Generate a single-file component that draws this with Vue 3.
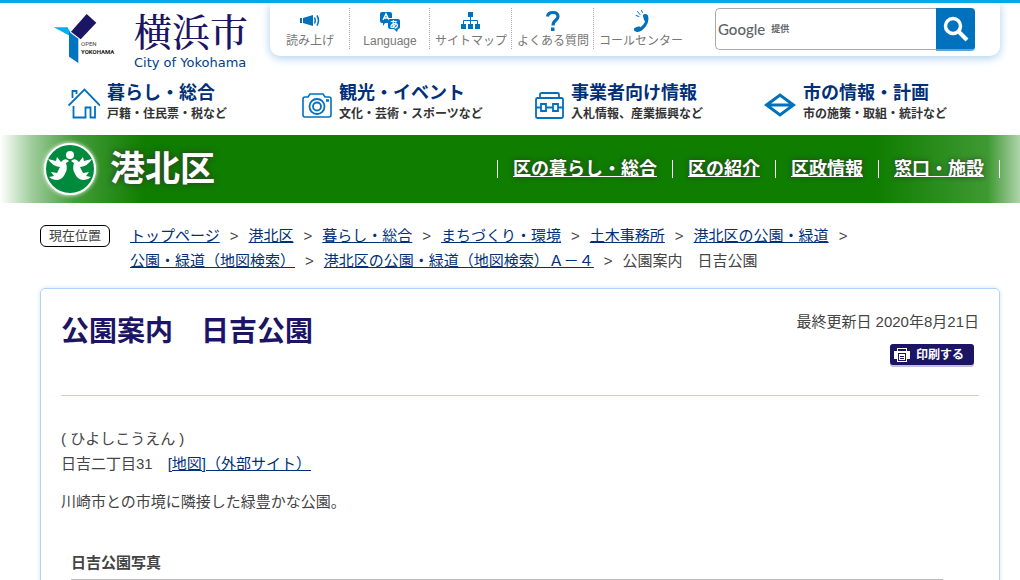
<script setup>
const tools = [
  { id: 'speech', label: '読み上げ' },
  { id: 'language', label: 'Language' },
  { id: 'sitemap', label: 'サイトマップ' },
  { id: 'faq', label: 'よくある質問' },
  { id: 'call', label: 'コールセンター' },
]
const mainNav = [
  { id: 'house', title: '暮らし・総合', sub: '戸籍・住民票・税など' },
  { id: 'camera', title: '観光・イベント', sub: '文化・芸術・スポーツなど' },
  { id: 'case', title: '事業者向け情報', sub: '入札情報、産業振興など' },
  { id: 'emblem', title: '市の情報・計画', sub: '市の施策・取組・統計など' },
]
const wardNav = ['区の暮らし・総合', '区の紹介', '区政情報', '窓口・施設']
const crumbs = [
  'トップページ',
  '港北区',
  '暮らし・総合',
  'まちづくり・環境',
  '土木事務所',
  '港北区の公園・緑道',
  '公園・緑道（地図検索）',
  '港北区の公園・緑道（地図検索）Ａ－４',
]
</script>

<template>
  <div class="page">
    <header class="top">
      <a class="logo" href="#">
        <svg class="mark" viewBox="36 40 198 153" aria-hidden="true">
          <path d="M38 83H79L83 106Z" fill="#00b0f0" />
          <path d="M79 83L88 97L84 107L60 93Z" fill="#00b0f0" />
          <path d="M90 96L137 43L166 69L119 119Z" fill="#1c1464" />
          <path d="M84 96L112 117V190L84 171Z" fill="#0074bf" />
          <text x="120" y="139" class="m1">OPEN</text>
          <text x="120" y="163" class="m2">YOKOHAMA</text>
        </svg>
        <span class="names">
          <span class="ja">横浜市</span>
          <span class="en">City of Yokohama</span>
        </span>
      </a>
      <div class="panel">
        <ul class="tools">
          <li v-for="t in tools" :key="t.id">
            <a href="#">
              <svg v-if="t.id === 'speech'" width="20" height="22" viewBox="0 0 20 22">
                <path d="M0 8h2v5H0zM3 8L13 5v11L3 13z" fill="#0071bd" />
                <path d="M14.500 7.500q1.500 3 0 6M17 5.500q3 5 0 10" fill="none" stroke="#0071bd" stroke-width="1.500" />
              </svg>
              <svg v-else-if="t.id === 'language'" width="22" height="22" viewBox="0 0 22 22">
                <path d="M3 2h8q2 0 2 2v4H9v5H6l-2 3v-3H3q-2 0-2-2V4q0-2 2-2z" fill="#0071bd" />
                <path d="M11 9h8q2 0 2 2v6q0 2-2 2l-1 3-3-3h-4q-2 0-2-2v-6q0-2 2-2z" fill="#0071bd" />
                <path d="M4 10l3-6 2.500 5M5 8h4" fill="none" stroke="#fff" stroke-width="1.500" />
                <text x="10.500" y="17.500" class="kana">あ</text>
              </svg>
              <svg v-else-if="t.id === 'sitemap'" width="20" height="22" viewBox="0 0 20 22">
                <path d="M7 2h5v5H7zM0 14h5v5H0zM7 14h5v5H7zM14 14h5v5h-5z" fill="#0071bd" />
                <path d="M9.500 7v7M2.500 14v-3.500h14V14" fill="none" stroke="#0071bd" />
              </svg>
              <svg v-else-if="t.id === 'faq'" width="16" height="22" viewBox="0 0 16 22">
                <path d="M2.500 6.500q.5-4 5.500-4t5 4q0 2-2.500 4T8 15.500" fill="none" stroke="#0071bd" stroke-width="3.200" />
                <path d="M6 17.500h3.500V21H6z" fill="#0071bd" />
              </svg>
              <svg v-else width="18" height="22" viewBox="0 0 18 22" fill="none" stroke="#0071bd" stroke-linecap="round">
                <path d="M14.500 6Q16 11 12.500 15.500T5.500 20.500" stroke-width="3" />
                <path d="M13 6l1 3.500M4 19.500l3-1" stroke-width="4" />
                <path d="M4 5.500l3 1M5.500 1.500l2.500 3M9.500.5l1 2" />
              </svg>
              <span>{{ t.label }}</span>
            </a>
          </li>
        </ul>
        <form class="search" @submit.prevent>
          <label class="field">
            <span class="brand">Google</span>
            <span class="by">提供</span>
            <input type="text" aria-label="サイト内検索" />
          </label>
          <button type="submit" aria-label="検索">
            <svg width="26" height="26" viewBox="0 0 26 26" fill="none" stroke="#fff">
              <circle cx="10" cy="10" r="7.500" stroke-width="3.500" />
              <path d="M15.500 15.500L24 24" stroke-width="4" />
            </svg>
          </button>
        </form>
      </div>
    </header>

    <nav class="main-nav">
      <a v-for="n in mainNav" :key="n.id" href="#">
        <svg width="32" height="32" viewBox="0 0 32 32" fill="none" stroke="#0071bd" stroke-width="1.800">
          <path v-if="n.id === 'house'" d="M.5 17.500L16.500 1.500L32 17.500M4.500 10V3h4v3M5.500 18v11.500h12v-10h5v10H27V18" />
          <template v-else-if="n.id === 'camera'">
            <path d="M5 9h3l2-3h13l2 3h4q2 0 2 2v16q0 2-2 2H5q-2 0-2-2V11q0-2 2-2z" stroke-width="1.600" />
            <circle cx="17" cy="18.500" r="7.500" />
            <circle cx="17" cy="18.500" r="4" />
            <path d="M26 12.500h3" stroke-width="2.500" />
          </template>
          <path v-else-if="n.id === 'case'" d="M8 10V6.500q0-1.500 1.500-1.500h16q1.500 0 1.500 1.500V10M5.500 10h24q1.500 0 1.500 1.500v17q0 1.500-1.500 1.500h-24Q4 30 4 28.500v-17Q4 10 5.500 10zM4 19.500h5M14 19.500h7M26 19.500h5M9 16h5v7H9zM21 16h5v7h-5z" />
          <path v-else d="M2.500 17L16 7l13.500 10L16 27zM2 17h28" stroke-width="3" />
        </svg>
        <span class="label">
          <strong>{{ n.title }}</strong>
          <small>{{ n.sub }}</small>
        </span>
      </a>
    </nav>

    <div class="ward">
      <a class="ward-name" href="#">
        <svg width="60" height="60" viewBox="0 0 60 60">
          <circle cx="30" cy="30" r="25" fill="#008a3e" stroke="#fff" stroke-width="2" />
          <g fill="#fff">
            <circle cx="30" cy="16" r="4" />
            <path d="M8 20L16 22L17 18L21 23Q25 18 29 22L26 24Q28 30 25 35Q22 41 16 41Q12 41 9 38L14 37L11 33L17 34L20 28Q12 27 8 20z" />
            <path d="M52 20L44 22L43 18L39 23Q35 18 31 22L34 24Q32 30 35 35Q38 41 44 41Q48 41 51 38L46 37L49 33L43 34L40 28Q48 27 52 20z" />
          </g>
        </svg>
        <span>港北区</span>
      </a>
      <ul class="ward-nav">
        <li v-for="w in wardNav" :key="w"><a href="#">{{ w }}</a></li>
      </ul>
    </div>

    <nav class="crumbs">
      <span class="here">現在位置</span>
      <ol>
        <li v-for="c in crumbs" :key="c"><a href="#">{{ c }}</a><span class="sep">&gt;</span></li>
        <li>公園案内　日吉公園</li>
      </ol>
    </nav>

    <main class="article">
      <div class="head">
        <h1>公園案内　日吉公園</h1>
        <div class="meta">
          <p>最終更新日 2020年8月21日</p>
          <button type="button">
            <svg width="16" height="14" viewBox="0 0 16 14">
              <path d="M3 0h10v3h3v8h-3v3H3v-3H0V3h3z" fill="#fff" />
              <path d="M4 1h8v2H4zM4 5h8v1H4zM4 5h1v8H4zM11 5h1v8h-1zM6 8h4v1H6zM6 10h4v1H6zM4 12h8v1H4z" fill="#1c1464" />
            </svg>
            <span>印刷する</span>
          </button>
        </div>
      </div>
      <p>( ひよしこうえん )<br />日吉二丁目31　<a href="#">[地図]（外部サイト）</a></p>
      <p>川崎市との市境に隣接した緑豊かな公園。</p>
      <h2>日吉公園写真</h2>
    </main>
  </div>
</template>

<style>
body {
  margin: 0;
  background: #fff;
}
</style>

<style scoped>
.page {
  border-top: 3px solid #00a8ec;
  color: #444;
  font: 15px/25px "Liberation Sans", "Noto Sans CJK JP", sans-serif;
}
ul,
ol {
  list-style: none;
  margin: 0;
  padding: 0;
}
.top {
  display: flex;
  justify-content: space-between;
  align-items: flex-start;
  padding: 0 20px 0 53px;
  height: 78px;
}
.logo {
  display: flex;
  gap: 15px;
  text-decoration: none;
}
.mark {
  width: 66px;
  height: 51px;
  margin-top: 10px;
}
.m1,
.m2 {
  font-family: Roboto, sans-serif;
  font-size: 18px;
  fill: #444;
}
.m2 {
  font-weight: bold;
  fill: #222;
}
.names {
  display: flex;
  flex-direction: column;
}
.ja {
  font: 500 38px/50px "Noto Serif CJK JP", "Noto Sans CJK JP", serif;
  padding-top: 2px;
  color: #1c1464;
}
.en {
  font: 13px/16px "DejaVu Sans", sans-serif;
  color: #003f87;
}
.panel {
  display: flex;
  justify-content: space-between;
  width: 730px;
  height: 53px;
  box-sizing: border-box;
  padding: 5px 25px 0 0;
  background: #fff;
  border-radius: 0 0 10px 10px;
  box-shadow: 0 2px 10px #a9cfea;
  clip-path: inset(0 -20px -20px -20px);
}
.tools {
  display: flex;
}
.tools li {
  box-sizing: border-box;
  min-width: 80px;
  height: 41px;
  padding: 0 4px 0 5px;
  border-right: 1px dotted #aaa;
}
.tools li:last-child {
  border-right: 0;
}
.tools a {
  display: flex;
  flex-direction: column;
  align-items: center;
  padding-top: 2px;
  font-size: 12px;
  line-height: 18px;
  color: #777;
  text-decoration: none;
}
.kana {
  font: bold 9px "Noto Sans CJK JP", sans-serif;
  fill: #fff;
}
.search {
  display: flex;
}
.field {
  display: flex;
  align-items: center;
  box-sizing: border-box;
  width: 221px;
  height: 42px;
  padding-left: 2px;
  border: 1px solid #aaa;
  border-right: 0;
  border-radius: 5px 0 0 5px;
  color: #5f6368;
}
.brand {
  font: 500 15px/20px Lato, sans-serif;
}
.by {
  margin-left: 6px;
  font-size: 9px;
  font-weight: bold;
}
.field input {
  flex: 1;
  min-width: 0;
  border: 0;
  outline: 0;
  background: none;
}
.search button {
  display: grid;
  place-items: center;
  width: 39px;
  height: 43px;
  padding: 0;
  border: 0;
  border-bottom: 2px solid #5aa5d8;
  border-radius: 0 4px 4px 0;
  background: #0071bd;
}
.main-nav {
  display: grid;
  grid-template-columns: repeat(4, 1fr);
  padding: 0 24px 0 68px;
  height: 54px;
}
.main-nav a {
  display: flex;
  gap: 7px;
  text-decoration: none;
}
.main-nav svg {
  margin-top: 7px;
}
.label {
  display: flex;
  flex-direction: column;
}
.label strong {
  font-size: 18px;
  line-height: 24px;
  color: #003078;
}
.label small {
  font-size: 12px;
  font-weight: bold;
  line-height: 18px;
  color: #333;
}
.ward {
  display: flex;
  align-items: center;
  justify-content: space-between;
  height: 68px;
  padding: 0 20px 0 40px;
  background: linear-gradient(90deg, #fff 0, #9fcc9b 32px, #459c3b 75px, #0f7d00 145px, #0f7d00 calc(100% - 145px), #3f9933 calc(100% - 32px), #afd4ab 100%);
}
.ward-name {
  display: flex;
  align-items: center;
  gap: 10px;
  font-size: 35px;
  line-height: 50px;
  font-weight: bold;
  color: #fff;
  text-decoration: none;
  text-shadow: 0 0 6px #333;
}
.ward-name svg {
  filter: drop-shadow(0 0 2px #fff);
}
.ward-nav {
  display: flex;
  border-left: 1px solid #fff;
}
.ward-nav li {
  padding: 0 15px;
  border-right: 1px solid #fff;
  font-size: 18px;
  line-height: 18px;
  font-weight: bold;
}
.ward-nav a {
  color: #fff;
  text-shadow: 0 0 5px #333;
}
.crumbs {
  display: flex;
  align-items: flex-start;
  gap: 20px;
  padding: 20px 20px 15px 40px;
}
.here {
  flex: none;
  margin-top: 2px;
  padding: 0 8px;
  border: 1px solid #000;
  border-radius: 6px;
  font-size: 13px;
  line-height: 20px;
}
.crumbs ol {
  display: flex;
  flex-wrap: wrap;
}
.crumbs a,
.article a {
  color: #003078;
}
.sep {
  margin: 0 10px;
}
.article {
  margin: 0 20px 0 40px;
  padding: 20px 20px 40px;
  border: 1px solid #b0d4f8;
  border-radius: 5px;
  box-shadow: 0 0 5px #d5e6f5;
}
.head {
  display: flex;
  justify-content: space-between;
  height: 86px;
  margin-bottom: 30px;
  border-bottom: 1px solid #b9d3ea;
}
h1 {
  margin: 0;
  font-size: 28px;
  line-height: 46px;
  color: #1c1464;
}
.meta {
  display: flex;
  flex-direction: column;
  align-items: flex-end;
}
.meta button {
  display: flex;
  align-items: center;
  gap: 6px;
  height: 21px;
  margin: 0 5px 0 0;
  padding: 0 10px 0 4px;
  border: 0;
  border-radius: 3px;
  background: #1c1464;
  box-shadow: 0 2px 0 #c4bedd;
  color: #fff;
  font: bold 12px/20px "Liberation Sans", "Noto Sans CJK JP", sans-serif;
}
.article p {
  margin: 0 0 13px;
}
.article .meta p {
  margin: 0 0 10px;
}
h2 {
  width: 95%;
  margin: 36px 0 0 10px;
  padding-bottom: 4px;
  border-bottom: 1px solid #bbb;
  font-size: 15px;
  line-height: 25px;
}
</style>
